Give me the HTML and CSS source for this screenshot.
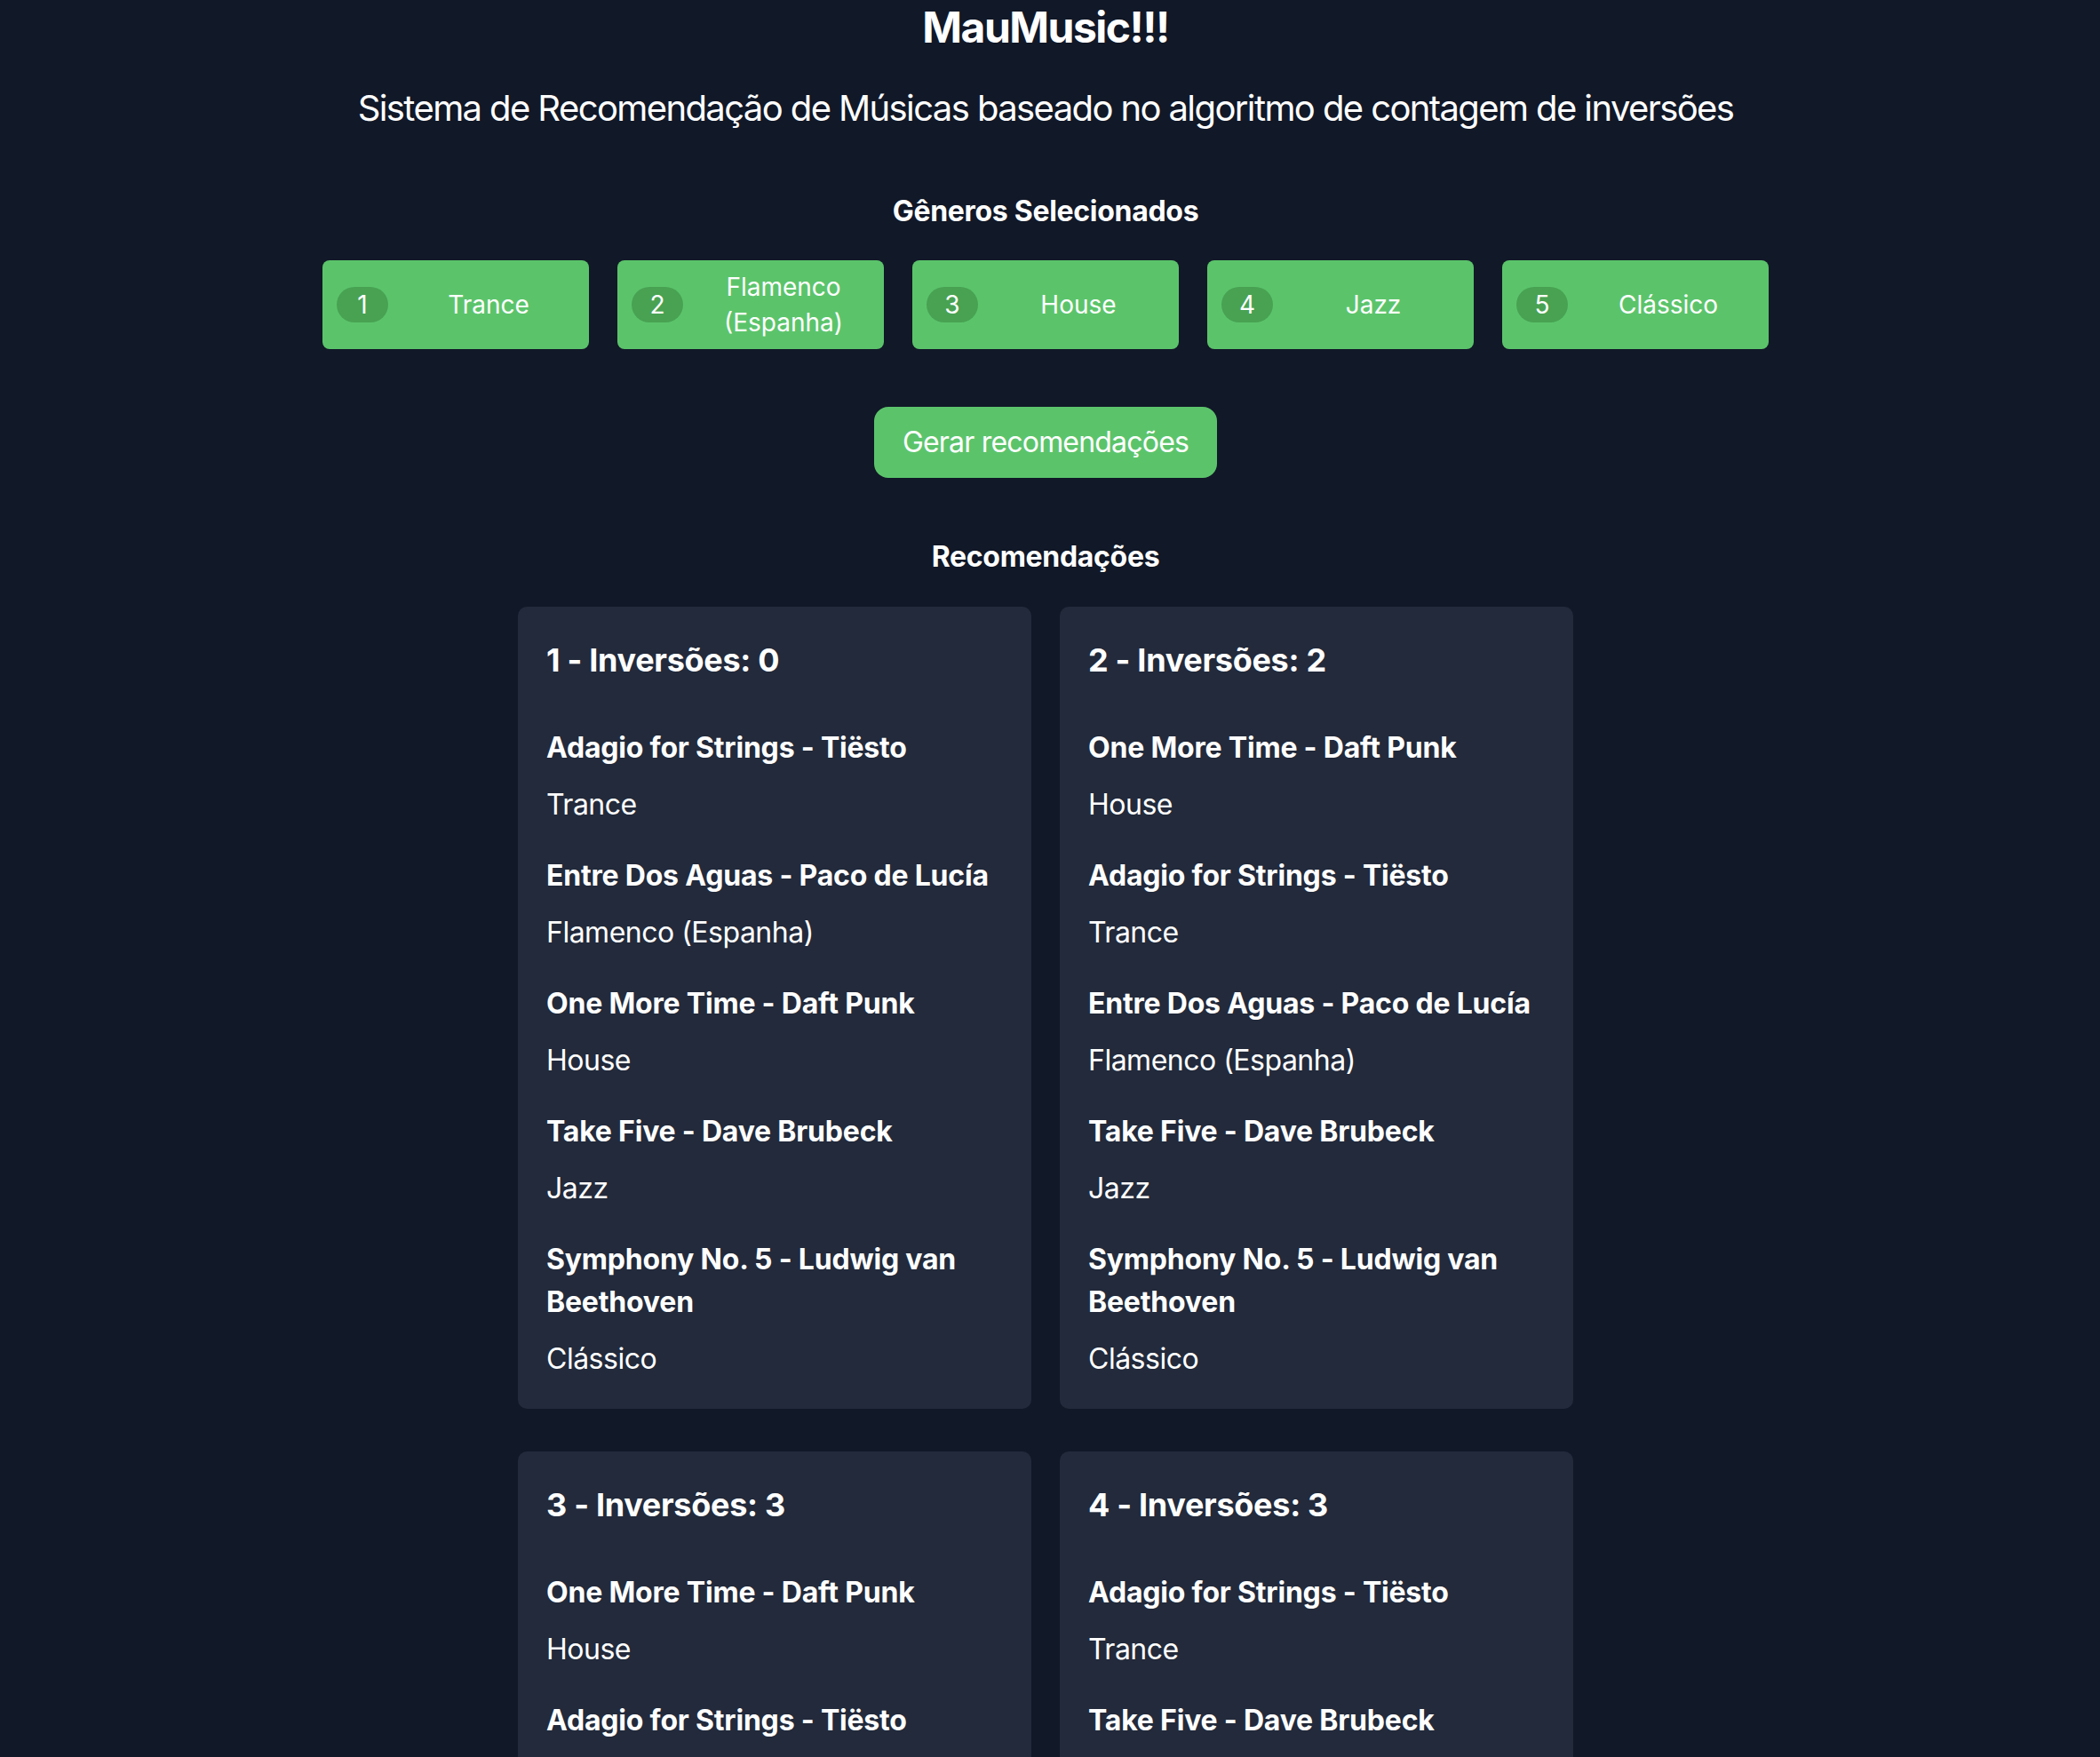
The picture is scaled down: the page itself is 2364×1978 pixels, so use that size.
FILE: index.html
```html
<!DOCTYPE html>
<html lang="pt-BR">
<head>
<meta charset="utf-8">
<title>MauMusic!!!</title>
<link rel="stylesheet" href="styles.css">
</head>
<body>
<main class="page">
  <h1 class="title">MauMusic!!!</h1>
  <p class="subtitle">Sistema de Recomendação de Músicas baseado no algoritmo de contagem de inversões</p>

  <h2 class="section-title genres-title">Gêneros Selecionados</h2>
  <div class="genres">
    <div class="genre"><span class="badge">1</span><span class="genre-name">Trance</span></div>
    <div class="genre"><span class="badge">2</span><span class="genre-name">Flamenco (Espanha)</span></div>
    <div class="genre"><span class="badge">3</span><span class="genre-name">House</span></div>
    <div class="genre"><span class="badge">4</span><span class="genre-name">Jazz</span></div>
    <div class="genre"><span class="badge">5</span><span class="genre-name">Clássico</span></div>
  </div>

  <button class="generate">Gerar recomendações</button>

  <h2 class="section-title recs-title">Recomendações</h2>
  <div class="cards">
    <section class="card">
      <h3 class="card-title">1 - Inversões: 0</h3>
      <ul class="songs">
        <li class="song"><p class="song-title">Adagio for Strings - Tiësto</p><p class="song-genre">Trance</p></li>
        <li class="song"><p class="song-title">Entre Dos Aguas - Paco de Lucía</p><p class="song-genre">Flamenco (Espanha)</p></li>
        <li class="song"><p class="song-title">One More Time - Daft Punk</p><p class="song-genre">House</p></li>
        <li class="song"><p class="song-title">Take Five - Dave Brubeck</p><p class="song-genre">Jazz</p></li>
        <li class="song"><p class="song-title">Symphony No. 5 - Ludwig van Beethoven</p><p class="song-genre">Clássico</p></li>
      </ul>
    </section>
    <section class="card">
      <h3 class="card-title">2 - Inversões: 2</h3>
      <ul class="songs">
        <li class="song"><p class="song-title">One More Time - Daft Punk</p><p class="song-genre">House</p></li>
        <li class="song"><p class="song-title">Adagio for Strings - Tiësto</p><p class="song-genre">Trance</p></li>
        <li class="song"><p class="song-title">Entre Dos Aguas - Paco de Lucía</p><p class="song-genre">Flamenco (Espanha)</p></li>
        <li class="song"><p class="song-title">Take Five - Dave Brubeck</p><p class="song-genre">Jazz</p></li>
        <li class="song"><p class="song-title">Symphony No. 5 - Ludwig van Beethoven</p><p class="song-genre">Clássico</p></li>
      </ul>
    </section>
    <section class="card">
      <h3 class="card-title">3 - Inversões: 3</h3>
      <ul class="songs">
        <li class="song"><p class="song-title">One More Time - Daft Punk</p><p class="song-genre">House</p></li>
        <li class="song"><p class="song-title">Adagio for Strings - Tiësto</p><p class="song-genre">Trance</p></li>
        <li class="song"><p class="song-title">Entre Dos Aguas - Paco de Lucía</p><p class="song-genre">Flamenco (Espanha)</p></li>
        <li class="song"><p class="song-title">Symphony No. 5 - Ludwig van Beethoven</p><p class="song-genre">Clássico</p></li>
        <li class="song"><p class="song-title">Take Five - Dave Brubeck</p><p class="song-genre">Jazz</p></li>
      </ul>
    </section>
    <section class="card">
      <h3 class="card-title">4 - Inversões: 3</h3>
      <ul class="songs">
        <li class="song"><p class="song-title">Adagio for Strings - Tiësto</p><p class="song-genre">Trance</p></li>
        <li class="song"><p class="song-title">Take Five - Dave Brubeck</p><p class="song-genre">Jazz</p></li>
        <li class="song"><p class="song-title">Entre Dos Aguas - Paco de Lucía</p><p class="song-genre">Flamenco (Espanha)</p></li>
        <li class="song"><p class="song-title">One More Time - Daft Punk</p><p class="song-genre">House</p></li>
        <li class="song"><p class="song-title">Symphony No. 5 - Ludwig van Beethoven</p><p class="song-genre">Clássico</p></li>
      </ul>
    </section>
  </div>
</main>
</body>
</html>
```
FILE: styles.css
```css
* { box-sizing: border-box; }

html, body {
  margin: 0;
  padding: 0;
  background: #111827;
}

body {
  font-family: Inter, "Liberation Sans", sans-serif;
  color: #ffffff;
}

.page {
  width: 2354px;
  display: flex;
  flex-direction: column;
  align-items: center;
  text-align: center;
  padding-bottom: 64px;
}

.title {
  margin: 0;
  font-size: 48px;
  line-height: 62px;
  font-weight: 700;
  letter-spacing: -1.5px;
}

.subtitle {
  margin: 32px 0 0;
  font-size: 40px;
  line-height: 56px;
  font-weight: 400;
  letter-spacing: -1.6px;
}

.section-title {
  margin: 0;
  font-size: 32px;
  line-height: 40px;
  font-weight: 700;
  letter-spacing: -0.3px;
}

.genres-title { margin-top: 68px; }

.genres {
  margin-top: 35px;
  display: flex;
  gap: 32px;
  justify-content: center;
  align-items: stretch;
}

.genre {
  width: 300px;
  min-height: 100px;
  padding: 10px 0 10px 16px;
  background: #5bc46b;
  border-radius: 8px;
  display: flex;
  align-items: center;
  font-size: 28px;
  line-height: 40px;
}

.badge {
  flex: none;
  width: 58px;
  height: 40px;
  border-radius: 20px;
  background: #48a252;
  text-align: center;
  line-height: 40px;
}

.genre-name {
  flex: 1;
  text-align: center;
  padding: 0 10px;
}

.generate {
  margin-top: 65px;
  padding: 16px 32px;
  border: 0;
  border-radius: 16px;
  background: #5bc46b;
  color: #ffffff;
  font-family: inherit;
  font-size: 32px;
  line-height: 48px;
  font-weight: 400;
  letter-spacing: -0.8px;
}

.recs-title { margin-top: 69px; }

.cards {
  margin-top: 36px;
  display: grid;
  grid-template-columns: 578px 578px;
  column-gap: 32px;
  row-gap: 48px;
  text-align: left;
}

.card {
  background: #222a3b;
  border-radius: 10px;
  padding: 32px;
}

.card-title {
  margin: 0 0 47px;
  font-size: 36px;
  line-height: 56px;
  font-weight: 700;
  letter-spacing: -0.3px;
}

.songs {
  list-style: none;
  margin: 0;
  padding: 0;
  display: flex;
  flex-direction: column;
  gap: 32px;
}

.song-title {
  margin: 0;
  font-size: 32px;
  line-height: 48px;
  font-weight: 700;
  letter-spacing: -0.2px;
}

.song-genre {
  margin: 16px 0 0;
  font-size: 32px;
  line-height: 48px;
  font-weight: 400;
  letter-spacing: -0.5px;
}
```
